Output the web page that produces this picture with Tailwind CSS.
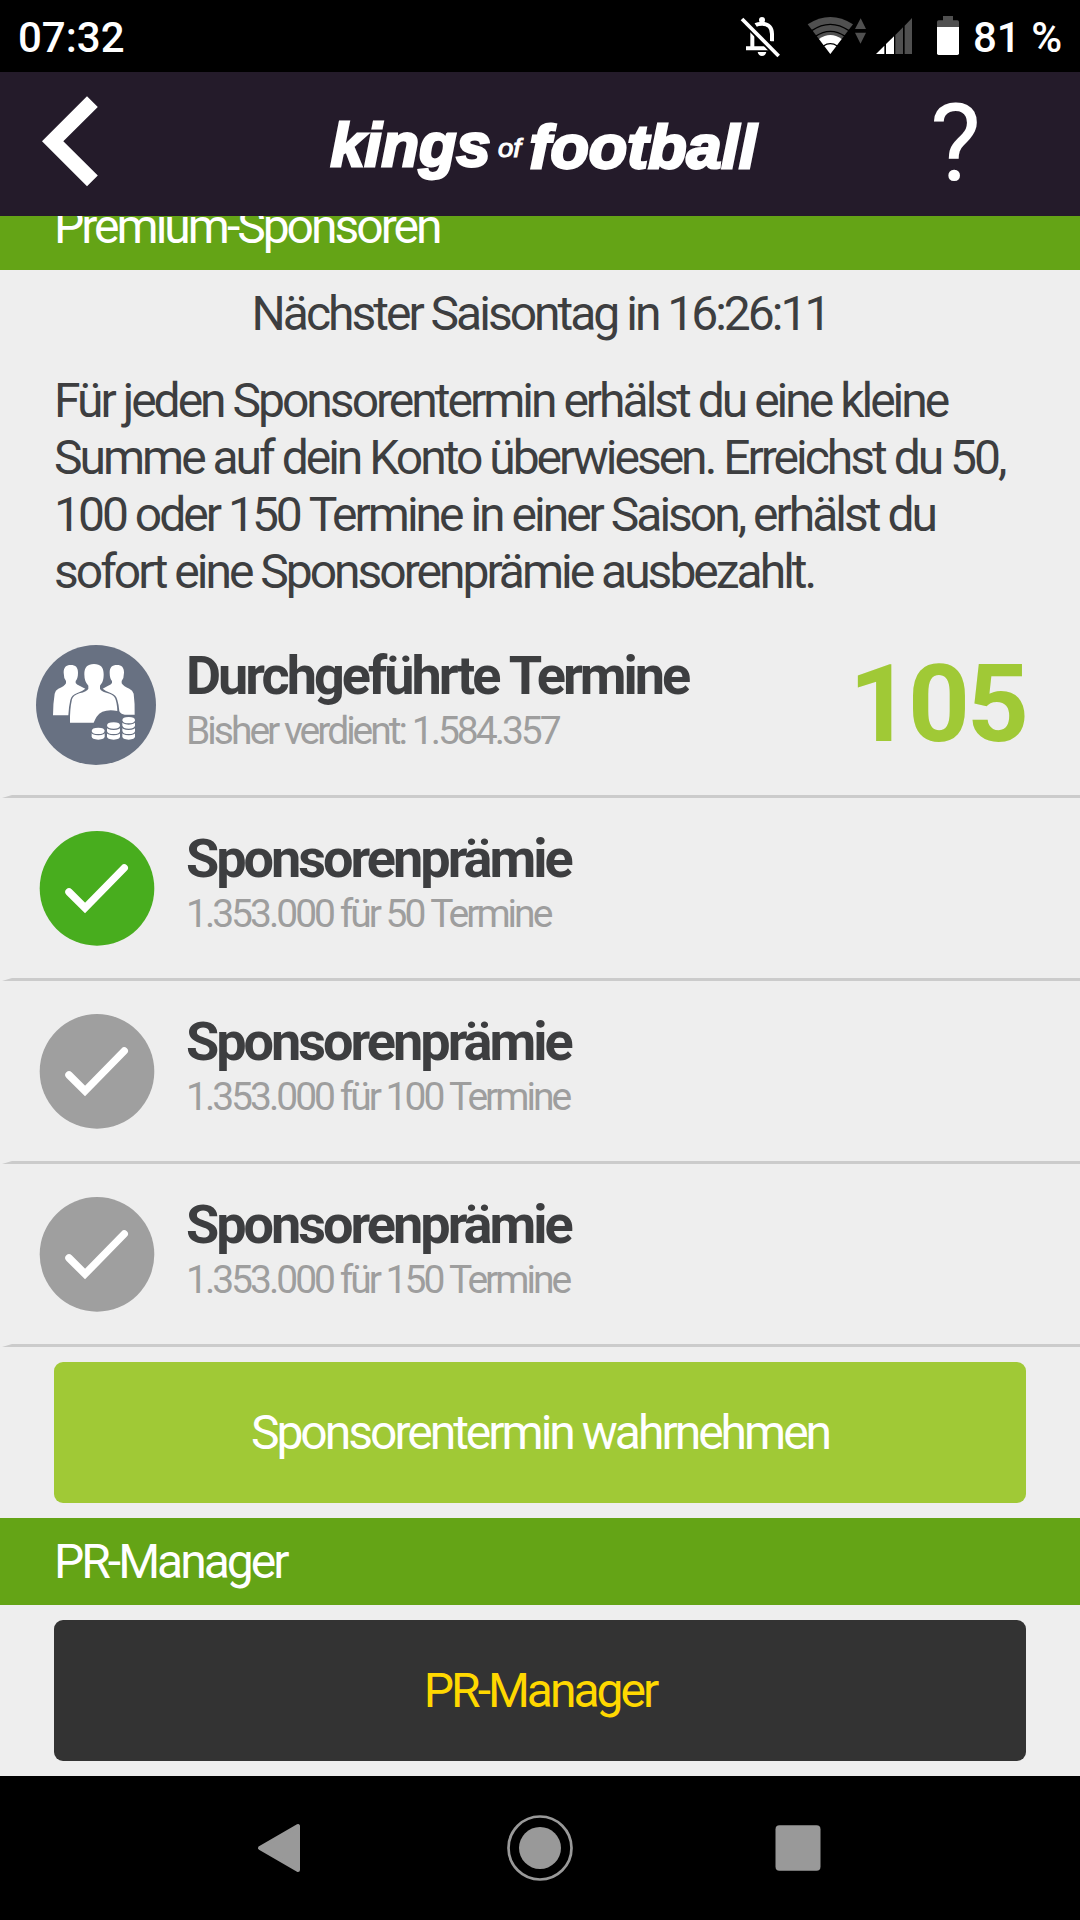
<!DOCTYPE html>
<html lang="de">
<head>
<meta charset="utf-8">
<title>kings of football</title>
<script src="https://cdn.jsdelivr.net/npm/@tailwindcss/browser@4"></script>
</head>
<body class="w-[1080px] h-[1920px] overflow-hidden bg-[#eeeeee] font-[Roboto,sans-serif] text-[#3d3e40] flex flex-col">
  <!-- Status bar -->
  <div class="h-[72px] shrink-0 bg-black text-white flex items-center text-[42px] leading-[50px] font-medium">
    <div class="pl-[18px] pt-[4px] w-[720px]">07:32</div>
    <svg class="w-[253px] h-[72px] shrink-0" viewBox="0 0 759 216">
      <g fill="none" stroke="#fff" stroke-width="12">
        <path d="M97 90V145M78 145H155"/>
        <path d="M107 75Q113 71 126 71C146 71 156 84 156 102V124"/>
        <path d="M67 56L177 167" stroke="#000" stroke-width="24"/>
        <path d="M66 57L176 168" stroke-width="11"/>
      </g>
      <circle cx="126" cy="60" r="9" fill="#fff"/>
      <path d="M113 156H139Q136 168 126 168Q116 168 113 156Z" fill="#fff"/>
      <path d="M331 162L263 73Q331 29 399 73Z" fill="#505050"/>
      <path d="M331 162L297 117Q331 93 365 117Z" fill="#fff"/>
      <g fill="none" stroke="#000" stroke-width="4">
        <path d="M275 92Q331 54 387 92M286 109Q331 79 376 109M310 138Q331 124 352 138"/>
      </g>
      <path d="M422 55L405 87H438ZM405 98H438L421.500 131Z" fill="#505050"/>
      <path d="M468 162L493 137V162ZM498 132L522 109V162H498Z" fill="#fff"/>
      <path d="M526 105L549 82V162H526ZM554 77L576 54V162H554Z" fill="#505050"/>
      <path d="M669 48H699V61H712Q717 61 717 66V81H651V66Q651 61 656 61H669Z" fill="#505050"/>
      <path d="M651 81H717V160Q717 165 712 165H656Q651 165 651 160Z" fill="#fff"/>
    </svg>
    <div class="pt-[4px] whitespace-nowrap">81 %</div>
  </div>

  <!-- App bar -->
  <header class="h-[144px] shrink-0 bg-[#241b2a] text-white">
    <svg class="w-[1080px] h-[144px]" viewBox="0 72 1080 144" fill="#fff">
      <path d="M87 96.300L97.800 107L63.300 141.300L97.800 175.500L87 186.300L42 141.300Z"/>
      <g class="font-['Liberation_Sans',sans-serif] font-bold italic" stroke="#fff" stroke-width="2.800">
        <text x="330.500" y="166.300" font-size="61.500" textLength="160" lengthAdjust="spacingAndGlyphs">kings</text>
        <text x="529.500" y="168" font-size="61.500" textLength="227" lengthAdjust="spacingAndGlyphs">football</text>
      </g>
      <text class="font-['Liberation_Sans',sans-serif] italic" x="498" y="157" font-size="25" textLength="23" lengthAdjust="spacingAndGlyphs" stroke="#fff" stroke-width="1">of</text>
      <text x="930" y="180" font-size="108">?</text>
    </svg>
  </header>

  <main class="h-[1560px] shrink-0 overflow-hidden">
    <h2 class="-mt-[33px] h-[87px] px-[54px] py-[15px] bg-[#64a416] text-white text-[48px] leading-[57px] tracking-[-3px]">Premium-Sponsoren</h2>
    <div class="px-[54px] py-[15px] text-[48px] leading-[57px] tracking-[-3px]">
      <p class="text-center">Nächster Saisontag in 16:26:11</p>
      <p class="mt-[30px] whitespace-nowrap">Für jeden Sponsorentermin erhälst du eine kleine<br>Summe auf dein Konto überwiesen. Erreichst du 50,<br>100 oder 150 <span class="inline-block">Termine</span> in einer Saison, erhälst du<br>sofort eine Sponsorenprämie ausbezahlt.</p>
    </div>

    <ul>
      <li class="h-[183px] flex flex-col">
        <div class="h-[180px] flex">
          <svg class="ml-9 mt-[30px] w-[120px] h-[120px] shrink-0" viewBox="48 44 360 360">
            <circle cx="228" cy="224" r="180" fill="#687182"/>
            <g fill="#fff">
              <path d="M131 127C131 111 138 104 152 104C167 104 174 111 174 127C174 140 171 147 167 152V158Q169 162 180 167L196 175Q188 182 172 188Q154 194 151 209Q146 230 145 255H99Q99 220 104 190Q106 179 115 175Q133 169 138 159V152Q131 143 131 127Z"/>
              <path d="M312 127C312 111 305 104 291 104C276 104 269 111 269 127C269 140 272 147 276 152V158Q274 162 263 167L248 175Q256 182 272 188Q289 194 292 209Q297 225 298 243Q304 253 314 253H344Q345 220 341 190Q338 179 328 175Q311 169 305 159V152Q312 143 312 127Z"/>
              <path d="M193 132C193 111 202 101 222 101C242 101 251 111 251 132C251 150 247 158 240 166V175Q243 182 259 187Q281 193 285 203Q291 216 292 242Q248 234 230 259Q226 265 221 277H150Q149 238 156 207Q159 195 178 189Q202 183 205 175V166Q193 155 193 132Z"/>
            </g>
            <g fill="#fff">
              <path d="M215 302Q215 292 235 292Q254 292 254 302V318Q254 328 235 328Q215 328 215 318Z"/>
              <path d="M261 286Q261 276 281 276Q300 276 300 286V318Q300 328 281 328Q261 328 261 318Z"/>
              <path d="M307 270Q307 260 326 260Q345 260 345 270V318Q345 328 326 328Q307 328 307 318Z"/>
            </g>
            <g fill="none" stroke="#687182" stroke-width="4">
              <path d="M213 303Q216 313 235 313Q253 313 256 303M259 287Q262 297 281 297Q299 297 302 287M259 303Q262 313 281 313Q299 313 302 303M305 271Q308 281 326 281Q344 281 347 271M305 287Q308 297 326 297Q344 297 347 287M305 303Q308 313 326 313Q344 313 347 303"/>
            </g>
          </svg>
          <div class="ml-[30px] mt-[29px] flex-1">
            <h3 class="text-[54px] leading-[63px] font-bold tracking-[-3px]">Durchgeführte <span class="inline-block">Termine</span></h3>
            <p class="mt-px text-[39px] leading-[46px] tracking-[-3px] text-[#9e9e9e]">Bisher verdient: 1.584.357</p>
          </div>
          <div class="mr-[54px] mt-[26px] text-[108px] leading-[127px] font-bold tracking-[-3px] text-[#a0c936]">105</div>
        </div>
        <div class="h-[3px] ml-[2px] bg-[#cbcbcb] [clip-path:polygon(10px_0,100%_0,100%_100%,0_100%)]"></div>
      </li>
      <li class="h-[183px] flex flex-col">
        <div class="h-[180px] flex">
          <svg class="ml-[39px] mt-[33px] w-[116px] h-[115px] shrink-0" viewBox="39 831 116 115"><circle cx="97" cy="888.400" r="57.300" fill="#48ad1e"/><path d="M69 892L85 908L124.200 868" fill="none" stroke="#fff" stroke-width="7.500" stroke-linecap="round"/></svg>
          <div class="ml-[31px] mt-[29px]">
            <h3 class="text-[54px] leading-[63px] font-bold tracking-[-3px]">Sponsorenprämie</h3>
            <p class="mt-px text-[39px] leading-[46px] tracking-[-3px] text-[#9e9e9e]">1.353.000 für 50 <span class="inline-block">Termine</span></p>
          </div>
        </div>
        <div class="h-[3px] ml-[2px] bg-[#cbcbcb] [clip-path:polygon(10px_0,100%_0,100%_100%,0_100%)]"></div>
      </li>
      <li class="h-[183px] flex flex-col">
        <div class="h-[180px] flex">
          <svg class="ml-[39px] mt-[33px] w-[116px] h-[115px] shrink-0" viewBox="39 831 116 115"><circle cx="97" cy="888.400" r="57.300" fill="#9f9f9f"/><path d="M69 892L85 908L124.200 868" fill="none" stroke="#fff" stroke-width="7.500" stroke-linecap="round"/></svg>
          <div class="ml-[31px] mt-[29px]">
            <h3 class="text-[54px] leading-[63px] font-bold tracking-[-3px]">Sponsorenprämie</h3>
            <p class="mt-px text-[39px] leading-[46px] tracking-[-3px] text-[#9e9e9e]">1.353.000 für 100 <span class="inline-block">Termine</span></p>
          </div>
        </div>
        <div class="h-[3px] ml-[2px] bg-[#cbcbcb] [clip-path:polygon(10px_0,100%_0,100%_100%,0_100%)]"></div>
      </li>
      <li class="h-[183px] flex flex-col">
        <div class="h-[180px] flex">
          <svg class="ml-[39px] mt-[33px] w-[116px] h-[115px] shrink-0" viewBox="39 831 116 115"><circle cx="97" cy="888.400" r="57.300" fill="#9f9f9f"/><path d="M69 892L85 908L124.200 868" fill="none" stroke="#fff" stroke-width="7.500" stroke-linecap="round"/></svg>
          <div class="ml-[31px] mt-[29px]">
            <h3 class="text-[54px] leading-[63px] font-bold tracking-[-3px]">Sponsorenprämie</h3>
            <p class="mt-px text-[39px] leading-[46px] tracking-[-3px] text-[#9e9e9e]">1.353.000 für 150 <span class="inline-block">Termine</span></p>
          </div>
        </div>
        <div class="h-[3px] ml-[2px] bg-[#cbcbcb] [clip-path:polygon(10px_0,100%_0,100%_100%,0_100%)]"></div>
      </li>
    </ul>

    <div class="px-[54px] py-[15px]">
      <button class="block w-full h-[141px] rounded-[9px] bg-[#a0c936] text-white text-[48px] leading-[57px] tracking-[-3px]">Sponsorentermin wahrnehmen</button>
    </div>
    <h2 class="h-[87px] px-[54px] py-[15px] bg-[#64a416] text-white text-[48px] leading-[57px] tracking-[-3px]">PR-Manager</h2>
    <div class="px-[54px] py-[15px]">
      <button class="block w-full h-[141px] rounded-[9px] bg-[#333333] text-[#ffd800] text-[48px] leading-[57px] tracking-[-3px]">PR-Manager</button>
    </div>
  </main>

  <!-- Navigation bar -->
  <nav class="h-[144px] shrink-0 bg-black">
    <svg class="w-[1080px] h-[144px]" viewBox="0 1776 1080 144" fill="#999">
      <path d="M260 1848L298 1826V1870Z" stroke="#999" stroke-width="4" stroke-linejoin="round"/>
      <circle cx="540" cy="1848" r="21"/>
      <circle cx="540" cy="1848" r="31.500" fill="none" stroke="#999" stroke-width="2.700"/>
      <rect x="775.500" y="1825.300" width="45" height="45.400" rx="4"/>
    </svg>
  </nav>
</body>
</html>
